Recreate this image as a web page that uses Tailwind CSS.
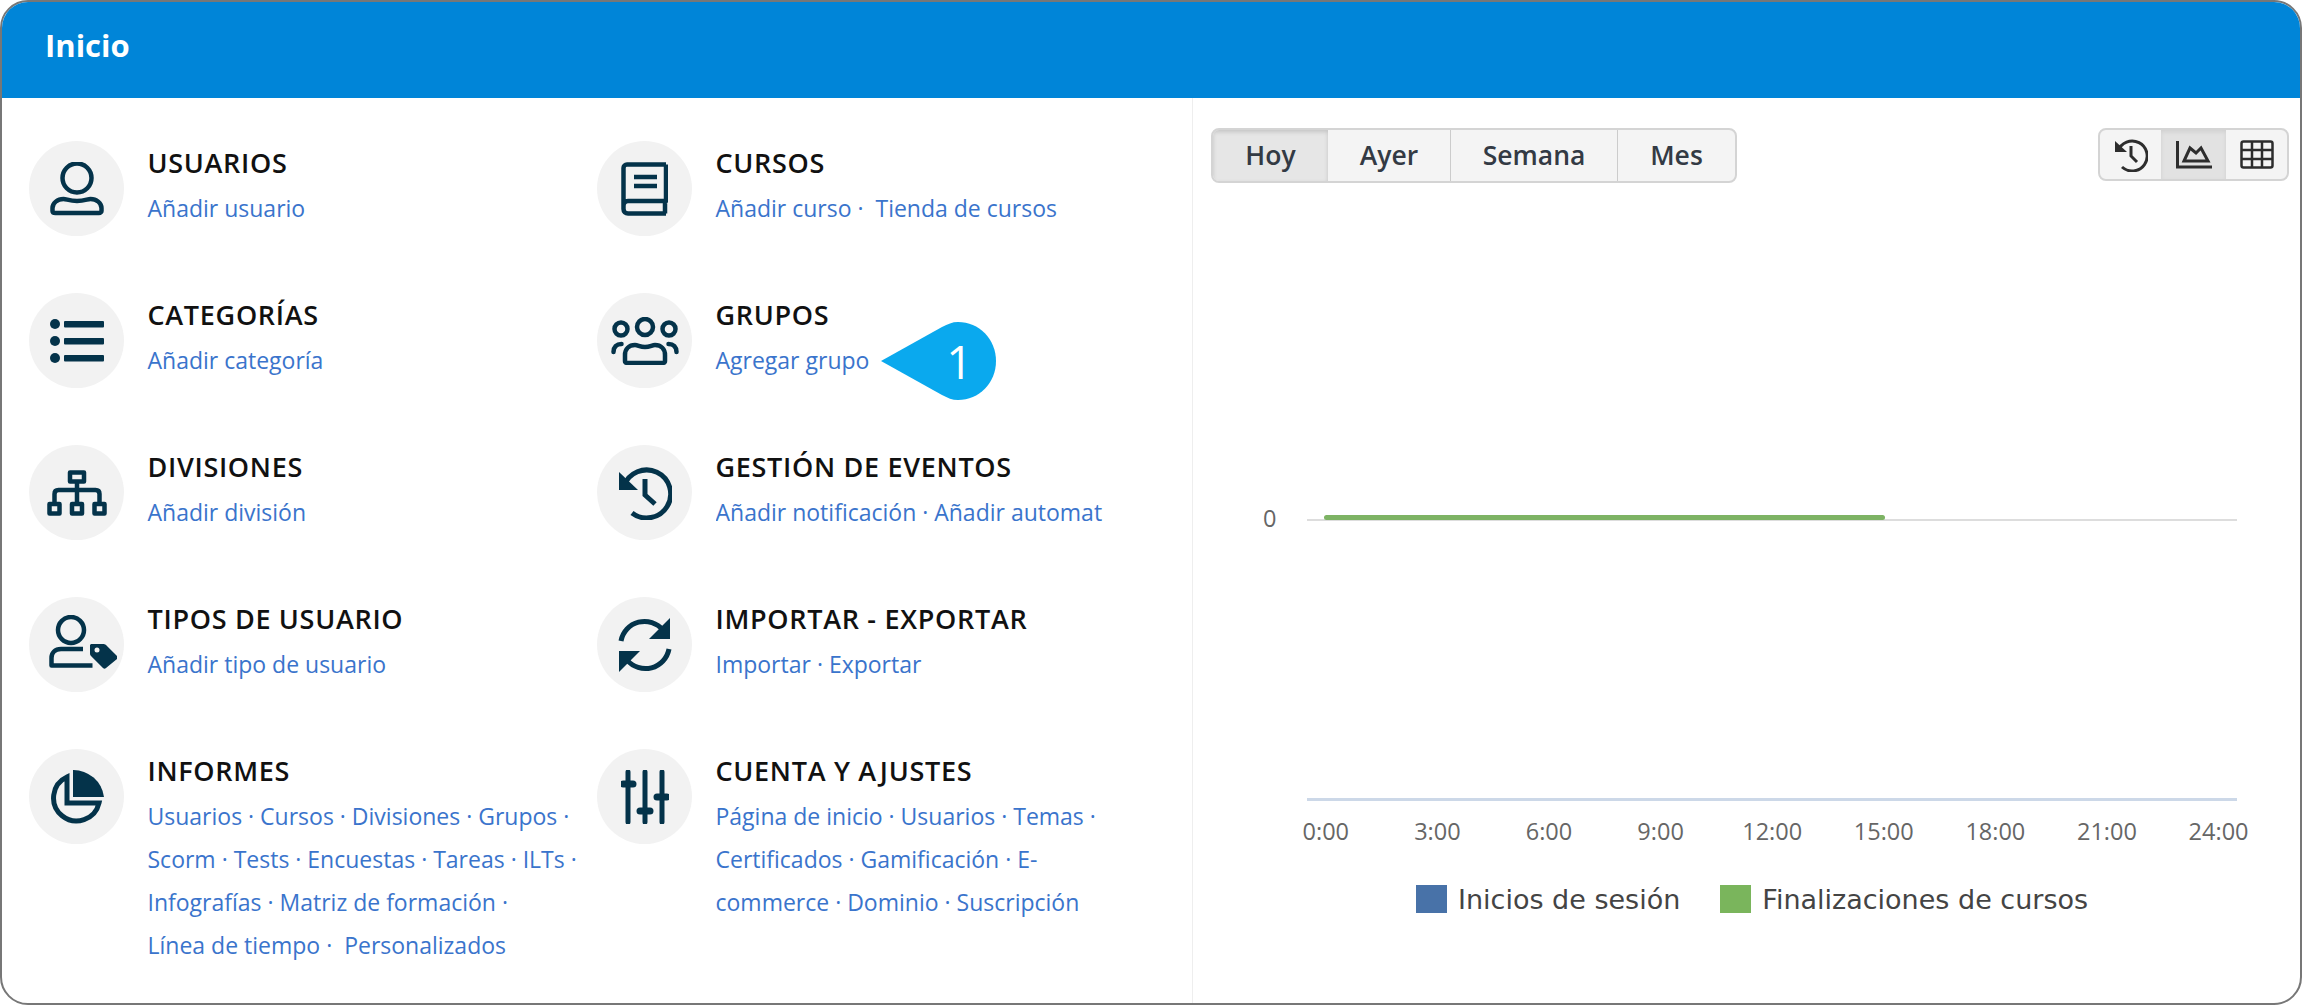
<!DOCTYPE html>
<html lang="es">
  <head>
    <meta charset="UTF-8" />
    <title>Inicio</title>
    <script src="https://cdn.jsdelivr.net/npm/@tailwindcss/browser@4"></script>
  </head>
  <body class="bg-white font-['Open_Sans',sans-serif]">
    <div class="w-[2302px] h-[1005px] border-2 border-[#777777] rounded-[28px] overflow-hidden flex flex-col">
      <!-- Header -->
      <div class="h-[96px] shrink-0 bg-[#0085d8] flex items-center pl-[43px] pb-[10px]">
        <h1 class="text-[31px] font-bold text-white">Inicio</h1>
      </div>

      <div class="flex flex-1">
        <!-- Shortcuts -->
        <div class="w-[1191px] shrink-0 border-r border-[#eeeeee] pt-[43px] pl-[27px] grid grid-cols-[568px_1fr] auto-rows-[152px]">
          <div class="flex gap-[23.500px]">
            <div class="w-[95px] h-[95px] rounded-full bg-[#f2f2f2] shrink-0 flex items-center justify-center">
              <svg width="54" height="54" viewBox="0 0 54 54" fill="none" stroke="#04334a" stroke-width="4.500">
                <circle cx="27" cy="16" r="14.500" />
                <path d="M5 51h44c1.500 0 2.500-1 2.500-2v-3c0-5-5-9-11-9-3 0-6 2-13.500 2s-10.500-2-13.500-2c-6 0-11 4-11 9v3c0 1 1 2 3 2z" stroke-linejoin="round" />
              </svg>
            </div>
            <div class="pt-[4px]">
              <h2 class="text-[27px] tracking-[0.7px] leading-[36px] font-[560] text-[#111111]">USUARIOS</h2>
              <p class="text-[23px] leading-[43px] mt-[6px] text-[#3a74cc]">Añadir usuario</p>
            </div>
          </div>

          <div class="flex gap-[23.500px]">
            <div class="w-[95px] h-[95px] rounded-full bg-[#f2f2f2] shrink-0 flex items-center justify-center">
              <svg width="47" height="54" viewBox="0 0 47 54" fill="none" stroke="#04334a" stroke-width="4.500">
                <path d="M45 2.500H6C4 2.500 2.500 4 2.500 6v41c0 3 2 4.500 4.500 4.500h38M2.500 44c0-3 2-5 4.500-5h38V2.500M44 39v12.500" stroke-linejoin="round" />
                <path d="M13 15h23M13 24h23" />
              </svg>
            </div>
            <div class="pt-[4px]">
              <h2 class="text-[27px] tracking-[0.7px] leading-[36px] font-[560] text-[#111111]">CURSOS</h2>
              <p class="text-[23px] leading-[43px] mt-[6px] text-[#3a74cc]">Añadir curso · &nbsp;Tienda de cursos</p>
            </div>
          </div>

          <div class="flex gap-[23.500px]">
            <div class="w-[95px] h-[95px] rounded-full bg-[#f2f2f2] shrink-0 flex items-center justify-center">
              <svg width="54" height="44" viewBox="0 0 54 44" fill="#04334a">
                <circle cx="5" cy="5" r="5" />
                <circle cx="5" cy="22" r="5" />
                <circle cx="5" cy="39" r="5" />
                <rect x="14" y="2" width="40" height="6.500" rx="1" />
                <rect x="14" y="19" width="40" height="6.500" rx="1" />
                <rect x="14" y="36" width="40" height="6.500" rx="1" />
              </svg>
            </div>
            <div class="pt-[4px]">
              <h2 class="text-[27px] tracking-[0.7px] leading-[36px] font-[560] text-[#111111]">CATEGORÍAS</h2>
              <p class="text-[23px] leading-[43px] mt-[6px] text-[#3a74cc]">Añadir categoría</p>
            </div>
          </div>

          <div class="flex gap-[23.500px]">
            <div class="w-[95px] h-[95px] rounded-full bg-[#f2f2f2] shrink-0 flex items-center justify-center">
              <svg width="68" height="48" viewBox="0 0 68 48" fill="none" stroke="#04334a" stroke-width="4.500" stroke-linecap="round">
                <circle cx="34" cy="10" r="8" />
                <circle cx="10" cy="12" r="6.500" />
                <circle cx="58" cy="12" r="6.500" />
                <path d="M17 46h34c2 0 3-1 3-2v-6c0-6-4-10-10-10-3 0-5 2-10 2s-7-2-10-2c-6 0-10 4-10 10v6c0 1 1 2 3 2z" stroke-linejoin="round" />
                <path d="M2.500 35c0-5 3-8 8-8M65.500 35c0-5-3-8-8-8" />
              </svg>
            </div>
            <div class="pt-[4px] relative">
              <h2 class="text-[27px] tracking-[0.7px] leading-[36px] font-[560] text-[#111111]">GRUPOS</h2>
              <p class="text-[23px] leading-[43px] mt-[6px] text-[#3a74cc]">Agregar grupo</p>
              <!-- Callout -->
              <div class="absolute left-[162px] top-[29px] w-[118px] h-[78px]">
                <svg class="absolute inset-0" width="118" height="78" viewBox="0 0 118 78">
                  <path d="M3 39 64 5C70 2 74 0 80 0c21 0 38 17 38 39s-17 39-38 39c-6 0-10-2-16-5z" fill="#0aa9ee" />
                </svg>
                <span class="absolute left-[64px] top-0 w-[36px] h-[78px] text-[46px] leading-[78px] text-white text-center">1</span>
              </div>
            </div>
          </div>

          <div class="flex gap-[23.500px]">
            <div class="w-[95px] h-[95px] rounded-full bg-[#f2f2f2] shrink-0 flex items-center justify-center">
              <svg width="60" height="46" viewBox="0 0 60 46" fill="none" stroke="#04334a" stroke-width="4.500" stroke-linejoin="round">
                <rect x="23" y="2.500" width="14" height="9" />
                <path d="M30 12v20M7.500 33v-9c0-2 1-4 4-4h37c3 0 4 2 4 4v9" />
                <rect x="2.500" y="34" width="10" height="9.500" />
                <rect x="25" y="34" width="10" height="9.500" />
                <rect x="47.500" y="34" width="10" height="9.500" />
              </svg>
            </div>
            <div class="pt-[4px]">
              <h2 class="text-[27px] tracking-[0.7px] leading-[36px] font-[560] text-[#111111]">DIVISIONES</h2>
              <p class="text-[23px] leading-[43px] mt-[6px] text-[#3a74cc]">Añadir división</p>
            </div>
          </div>

          <div class="flex gap-[23.500px]">
            <div class="w-[95px] h-[95px] rounded-full bg-[#f2f2f2] shrink-0 flex items-center justify-center">
              <svg width="54" height="54" viewBox="0 0 54 54" fill="none" stroke="#04334a">
                <path d="M6 20A24 24 0 1 1 14 47" stroke-width="5" />
                <path d="M1 6 20 24H1z" fill="#04334a" stroke="none" />
                <path d="M27 13v16l10 9" stroke-width="5" />
              </svg>
            </div>
            <div class="pt-[4px]">
              <h2 class="text-[27px] tracking-[0.7px] leading-[36px] font-[560] text-[#111111]">GESTIÓN DE EVENTOS</h2>
              <p class="text-[23px] leading-[43px] mt-[6px] text-[#3a74cc] w-[390px] whitespace-nowrap overflow-hidden">Añadir notificación · Añadir automat</p>
            </div>
          </div>

          <div class="flex gap-[23.500px]">
            <div class="w-[95px] h-[95px] rounded-full bg-[#f2f2f2] shrink-0 flex items-center justify-center">
              <svg class="ml-[13px] mb-[6px]" width="68" height="54" viewBox="0 0 68 54" fill="none" stroke="#04334a" stroke-width="4.500">
                <circle cx="22" cy="15" r="13" />
                <path d="M34 34H12C6 34 2.500 38 2.500 43v7.500h41" stroke-linejoin="round" />
                <path d="M42 29h12c1 0 2 0 3 1l11 11c1 1 1 2 0 3L57 53c-1 1-2 1-3 0L42 41c-1-1-1-2-1-3v-8z" fill="#04334a" stroke="none" />
                <circle cx="48" cy="35" r="2.500" fill="#f2f2f2" stroke="none" />
              </svg>
            </div>
            <div class="pt-[4px]">
              <h2 class="text-[27px] tracking-[0.7px] leading-[36px] font-[560] text-[#111111]">TIPOS DE USUARIO</h2>
              <p class="text-[23px] leading-[43px] mt-[6px] text-[#3a74cc]">Añadir tipo de usuario</p>
            </div>
          </div>

          <div class="flex gap-[23.500px]">
            <div class="w-[95px] h-[95px] rounded-full bg-[#f2f2f2] shrink-0 flex items-center justify-center">
              <svg width="54" height="54" viewBox="0 0 54 54" fill="none" stroke="#04334a" stroke-width="5">
                <path d="M3 23A24 24 0 0 1 45 12" />
                <path d="M52 0v21H31z" fill="#04334a" stroke="none" />
                <path d="M51 31A24 24 0 0 1 9 42" />
                <path d="M1 54V33h21z" fill="#04334a" stroke="none" />
              </svg>
            </div>
            <div class="pt-[4px]">
              <h2 class="text-[27px] tracking-[0.7px] leading-[36px] font-[560] text-[#111111]">IMPORTAR - EXPORTAR</h2>
              <p class="text-[23px] leading-[43px] mt-[6px] text-[#3a74cc]">Importar · Exportar</p>
            </div>
          </div>

          <div class="flex gap-[23.500px]">
            <div class="w-[95px] h-[95px] rounded-full bg-[#f2f2f2] shrink-0 flex items-center justify-center">
              <svg width="54" height="54" viewBox="0 0 54 54" fill="none" stroke="#04334a" stroke-width="5">
                <path d="M17 7a23 23 0 1 0 32 26H17z" />
                <path d="M23 0a31 31 0 0 1 31 27H23z" fill="#04334a" stroke="none" />
              </svg>
            </div>
            <div class="pt-[4px]">
              <h2 class="text-[27px] tracking-[0.7px] leading-[36px] font-[560] text-[#111111]">INFORMES</h2>
              <p class="text-[23px] leading-[43px] mt-[6px] text-[#3a74cc] whitespace-nowrap">Usuarios · Cursos · Divisiones · Grupos ·<br />Scorm · Tests · Encuestas · Tareas · ILTs ·<br />Infografías · Matriz de formación ·<br />Línea de tiempo · &nbsp;Personalizados</p>
            </div>
          </div>

          <div class="flex gap-[23.500px]">
            <div class="w-[95px] h-[95px] rounded-full bg-[#f2f2f2] shrink-0 flex items-center justify-center">
              <svg width="48" height="54" viewBox="0 0 48 54" fill="none" stroke="#04334a" stroke-linecap="round">
                <path d="M7 2v50M24 2v50M41 2v50" stroke-width="5" />
                <path d="M2 14h10M19 41h10M36 27h10" stroke-width="7" />
              </svg>
            </div>
            <div class="pt-[4px]">
              <h2 class="text-[27px] tracking-[0.7px] leading-[36px] font-[560] text-[#111111]">CUENTA Y A<span class="ml-[3px]">JUSTES</span></h2>
              <p class="text-[23px] leading-[43px] mt-[6px] text-[#3a74cc] whitespace-nowrap">Página de inicio · Usuarios · Temas ·<br />Certificados · Gamificación · E-<br />commerce · Dominio · Suscripción</p>
            </div>
          </div>
        </div>

        <!-- Chart panel -->
        <div class="flex-1 pl-[18px] pr-[11px] pt-[30px] relative">
          <div class="flex justify-between items-start">
            <div class="flex h-[55px] rounded-lg border-2 border-[#d4d4d4] bg-[#f4f4f4] text-[26.500px] font-semibold text-[#333a44] overflow-hidden">
              <div class="w-[115px] bg-[#e6e6e6] shadow-[inset_0_2px_4px_rgba(0,0,0,0.15)] flex items-center justify-center">Hoy</div>
              <div class="w-[123px] border-r border-[#cccccc] flex items-center justify-center">Ayer</div>
              <div class="w-[167px] border-r border-[#cccccc] flex items-center justify-center">Semana</div>
              <div class="w-[117px] flex items-center justify-center">Mes</div>
            </div>
            <div class="flex w-[191px] h-[53px] rounded-lg border-2 border-[#d4d4d4] bg-[#f4f4f4] overflow-hidden">
              <div class="w-[61px] flex items-center justify-center">
                <svg width="34" height="34" viewBox="0 0 34 34" fill="none" stroke="#2d2d2d" stroke-width="3">
                  <path d="M4 13A15 15 0 1 1 8 29" />
                  <path d="M1 3 13 14H1z" fill="#2d2d2d" stroke="none" />
                  <path d="M17 8v10l6 6" />
                </svg>
              </div>
              <div class="w-[65px] bg-[#e2e2e2] shadow-[inset_0_2px_4px_rgba(0,0,0,0.08)] flex items-center justify-center">
                <svg width="36" height="28" viewBox="0 0 36 28" fill="none" stroke="#2d2d2d" stroke-width="3">
                  <path d="M1.500 0v26h34.500" />
                  <path d="M8 20 14 7l6 5 5-5 7 13z" />
                </svg>
              </div>
              <div class="flex-1 flex items-center justify-center">
                <svg width="34" height="29" viewBox="0 0 34 29" fill="none" stroke="#2d2d2d" stroke-width="2.500">
                  <rect x="1.500" y="1.500" width="31" height="26" rx="2" />
                  <path d="M1 10h32M1 19h32M12 1v27M22 1v27" />
                </svg>
              </div>
            </div>
          </div>

          <!-- Plot -->
          <div class="relative h-[634px] w-full">
            <span class="absolute left-[52px] top-[321px] text-[23.500px] leading-[28px] text-[#666666]">0</span>
            <div class="absolute left-[96px] right-[52px] top-[336px] h-[2px] bg-[#dddddd]"></div>
            <div class="absolute left-[113px] w-[561px] top-[332px] h-[5px] rounded-sm bg-[#7db364]"></div>
            <div class="absolute left-[96px] right-[52px] top-[615px] h-[3px] bg-[#ccd8e8]"></div>
          </div>
          <!-- Axis labels -->
          <div class="grid grid-cols-[repeat(9,111.600px)] ml-[59px] text-center text-[23.500px] leading-[28px] text-[#666666]">
            <span>0:00</span><span>3:00</span><span>6:00</span><span>9:00</span><span>12:00</span><span>15:00</span><span>18:00</span><span>21:00</span><span>24:00</span>
          </div>
          <!-- Legend -->
          <div class="flex items-center ml-[205px] mt-[38px] text-[27px] leading-[28px] text-[#444444] font-['DejaVu_Sans',sans-serif] whitespace-nowrap">
            <span class="w-[31px] h-[28px] bg-[#4872a8] mr-[11px]"></span>
            <span class="mr-[40px] pt-[3px]">Inicios de sesión</span>
            <span class="w-[31px] h-[28px] bg-[#7ab55c] mr-[11px]"></span>
            <span class="pt-[3px]">Finalizaciones de cursos</span>
          </div>
        </div>
      </div>
    </div>
  </body>
</html>
